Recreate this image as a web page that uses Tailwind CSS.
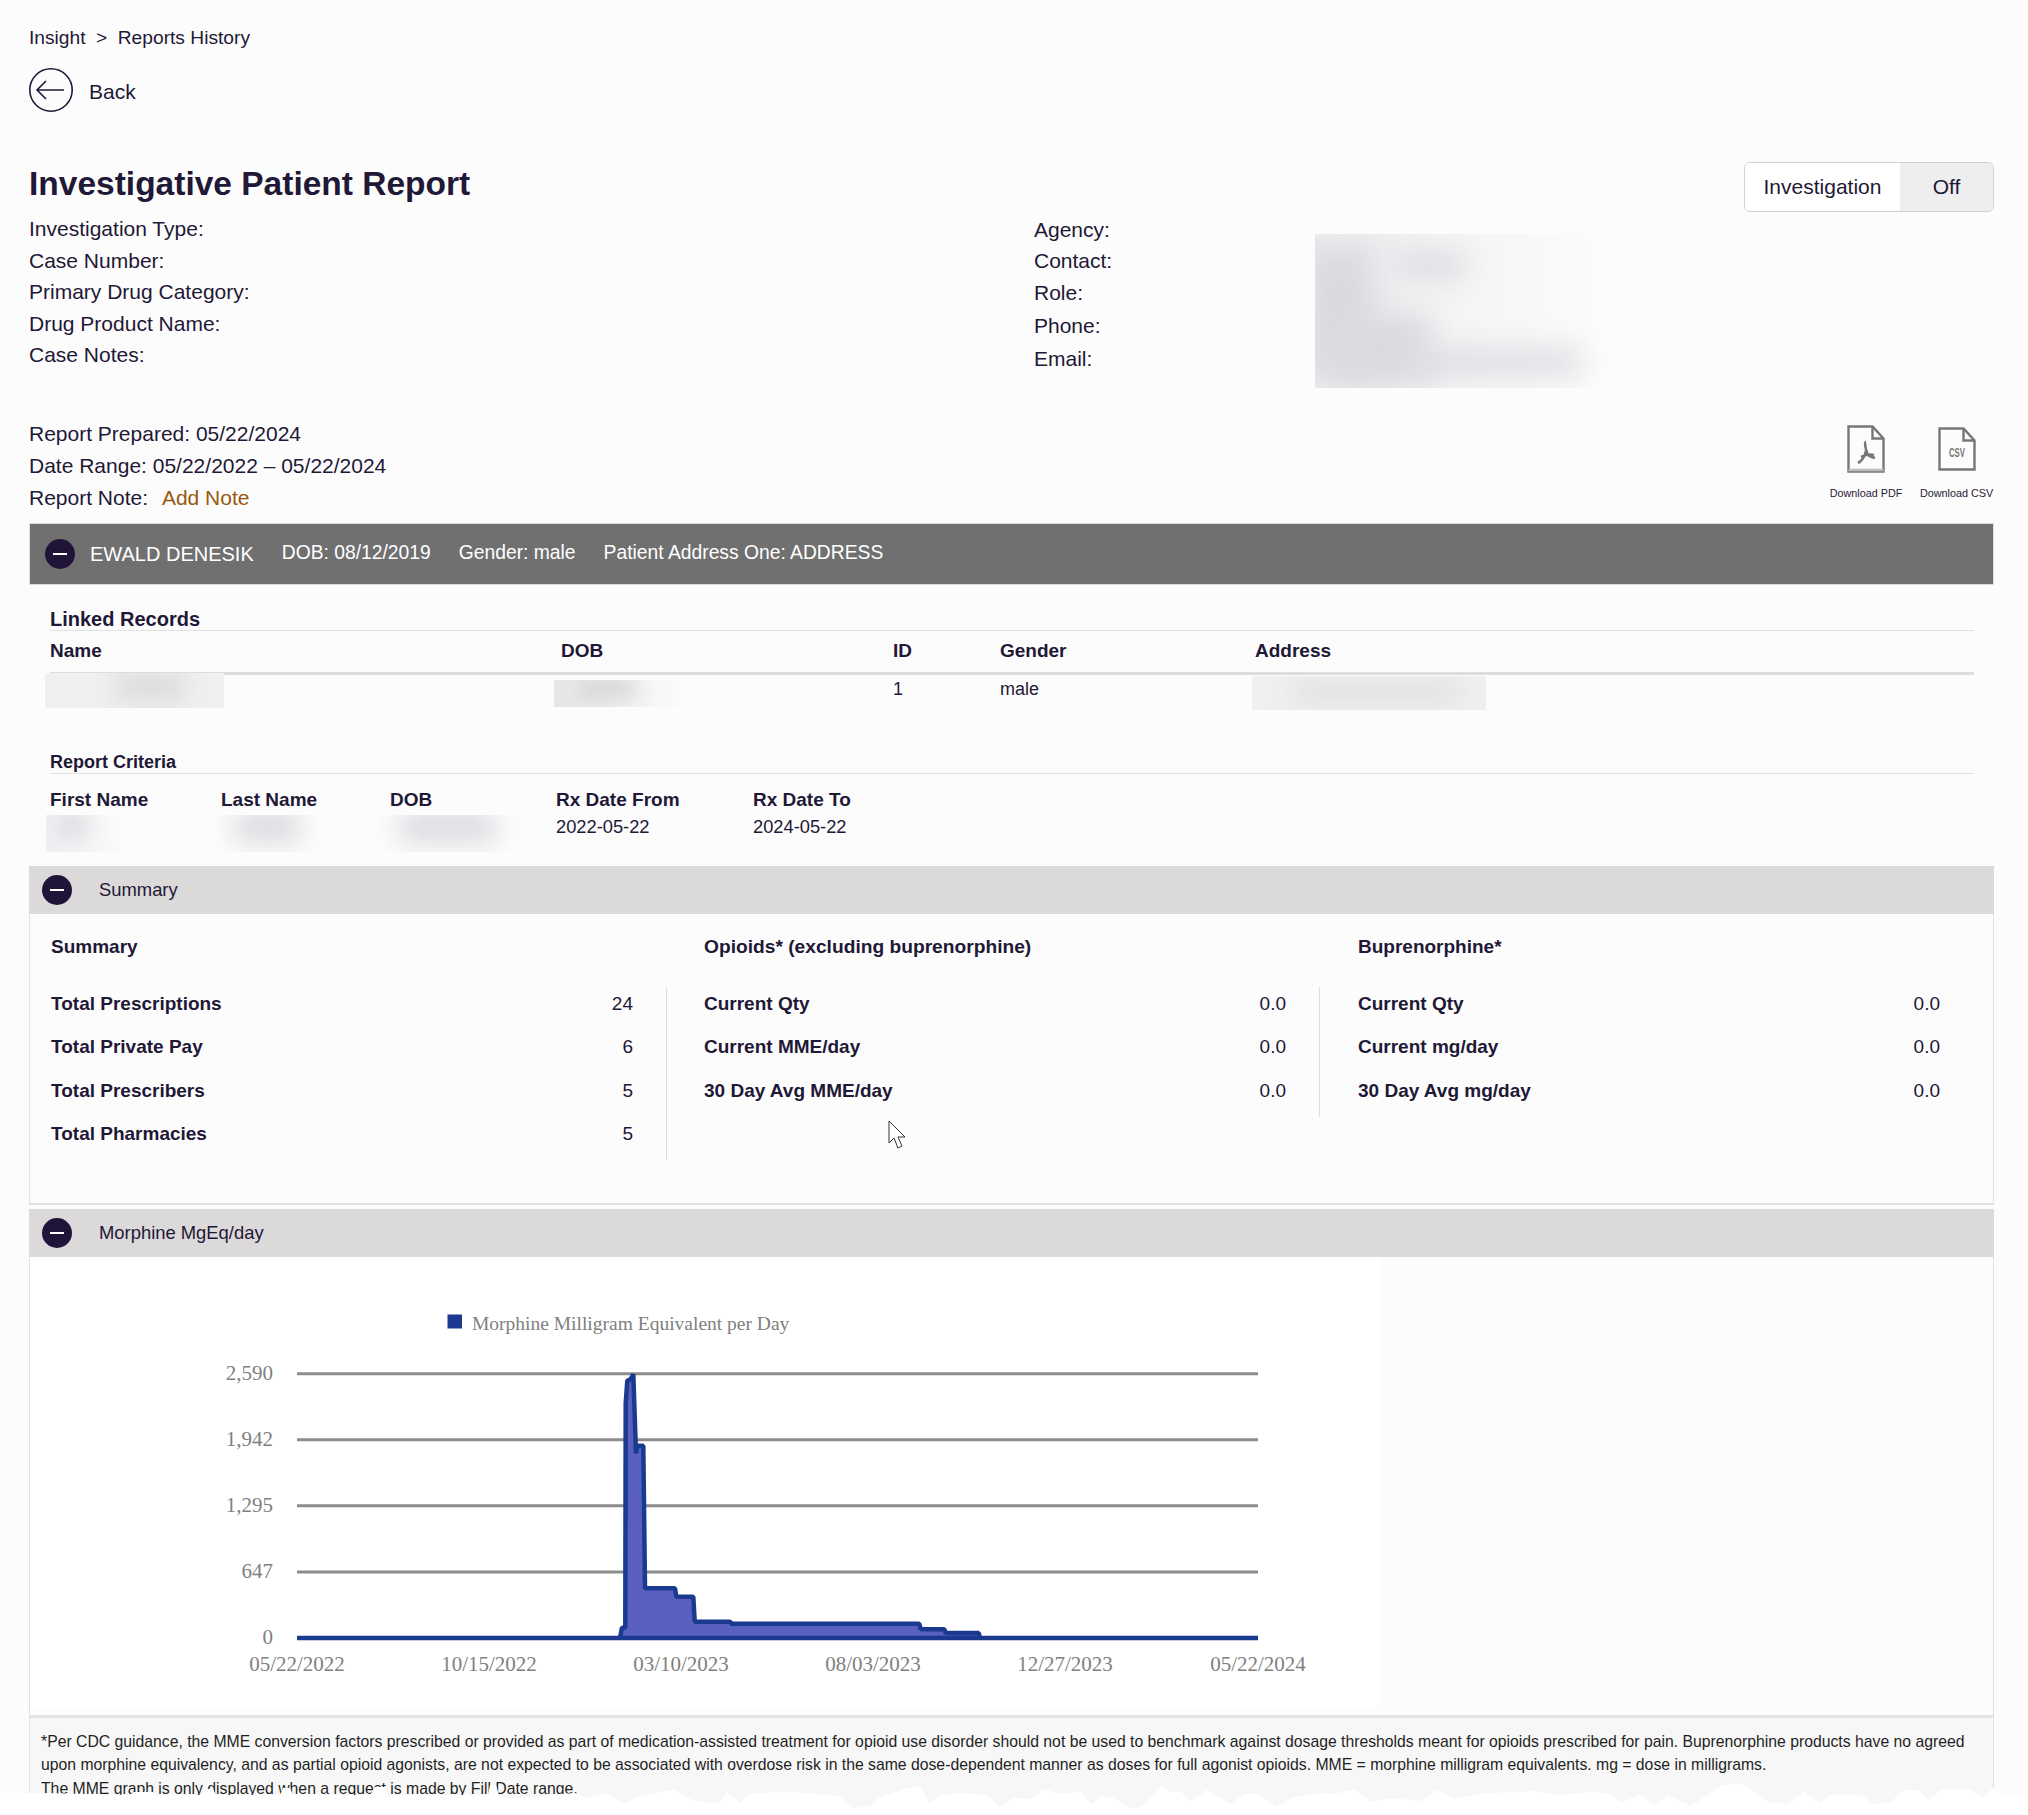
<!DOCTYPE html>
<html lang="en">
<head>
<meta charset="UTF-8">
<title>Investigative Patient Report</title>
<script src="https://cdn.jsdelivr.net/npm/@tailwindcss/browser@4"></script>
</head>
<body class="bg-[#fcfcfc] font-['Liberation_Sans',Arial,sans-serif] text-[#1f1836]">
<div class="relative w-[2028px] h-[1815px] overflow-hidden pl-[29px] pr-[34px]">

    <!-- breadcrumb / back -->
    <div class="pt-[26px] h-[50px] flex items-center gap-[10.5px] text-[19.2px] leading-6">
        <span>Insight</span><span>&gt;</span><span>Reports History</span>
    </div>
    <div class="mt-[18px] h-11 flex items-center gap-4">
        <svg class="w-11 h-11" viewBox="0 0 44 44" fill="none" stroke="#1f1836" stroke-width="1.6"><circle cx="22" cy="22" r="21.2"/><path d="M35 22H9M17 13l-9 9 9 9"/></svg>
        <span class="text-[21px] mt-[3px]">Back</span>
    </div>

    <!-- title -->
    <div class="mt-[50px] flex justify-between items-start">
        <h1 class="text-[33.5px] leading-[44px] font-bold">Investigative Patient Report</h1>
        <div class="flex w-[250px] h-[50px] border border-[#d0d0d0] rounded-[6px] overflow-hidden text-[21px]">
            <div class="w-[155px] flex items-center justify-center bg-white">Investigation</div>
            <div class="flex-1 flex items-center justify-center bg-[#eeeeee]">Off</div>
        </div>
    </div>

    <!-- investigation info -->
    <div class="relative mt-[2px] flex text-[21px] h-[203px]">
        <div class="w-[1005px] -mt-px leading-[31.5px]">
            <div>Investigation Type:</div>
            <div>Case Number:</div>
            <div>Primary Drug Category:</div>
            <div>Drug Product Name:</div>
            <div>Case Notes:</div>
        </div>
        <div>
            <div class="h-[31px] leading-[31px]">Agency:</div>
            <div class="h-[31px] leading-[31px]">Contact:</div>
            <div class="h-[33px] leading-[33px]">Role:</div>
            <div class="h-[33px] leading-[33px]">Phone:</div>
            <div class="h-[33px] leading-[33px]">Email:</div>
        </div>
        <!-- redacted contact -->
        <div class="absolute left-[1286px] top-[20px] w-[295px] h-[154px] overflow-hidden bg-linear-to-r from-[#eeeef0] to-[#fcfcfc]">
            <div class="absolute left-[-10px] top-[10px] w-[70px] h-[135px] bg-[#dbd9de] blur-[16px]"></div>
            <div class="absolute left-[80px] top-[18px] w-[70px] h-[26px] bg-[#dddbe0] blur-[14px]"></div>
            <div class="absolute left-[20px] top-[80px] w-[95px] h-[70px] bg-[#dcdae0] blur-[14px]"></div>
            <div class="absolute left-[90px] top-[115px] w-[175px] h-[26px] bg-[#dedce1] blur-[14px]"></div>
        </div>
    </div>

    <!-- report dates + downloads -->
    <div class="flex justify-between h-[106px] text-[21px] leading-[32px]">
        <div class="pt-px">
            <div>Report Prepared: 05/22/2024</div>
            <div>Date Range: 05/22/2022 – 05/22/2024</div>
            <div>Report Note: <a class="ml-[8px] text-[#98590f]">Add Note</a></div>
        </div>
        <div class="flex gap-[17px] pt-[8px] text-[10.8px] leading-[14px]">
            <div class="flex flex-col items-center w-[72px] whitespace-nowrap">
                <svg class="w-[38px] h-[48px]" viewBox="0 0 38 48" fill="none" stroke="#777" stroke-width="2.4"><path d="M1.5 1.5h24l11 12v33h-35z"/><path d="M25.5 1.5v12h11"/><path d="M1.5 45h35" stroke="#bbb"/><path d="M19 17c-2 0 0 8 1 11 1 3 4 4 8 5M19 26c-1 4-4 10-8 12M14 32c4-2 9-3 13-2" stroke-width="2.6"/></svg>
                <span class="mt-[13px]">Download PDF</span>
            </div>
            <div class="flex flex-col items-center w-[75px] whitespace-nowrap">
                <svg class="w-[38px] h-[44px] mt-[2px]" viewBox="0 0 38 44" fill="none" stroke="#777" stroke-width="2.4"><path d="M1.5 1.5h24l11 12v29h-35z"/><path d="M25.5 1.5v12h11"/><text x="19" y="30" text-anchor="middle" font-size="13" font-weight="700" fill="#777" stroke="none" font-family="Liberation Sans Narrow,Liberation Sans,sans-serif" textLength="16" lengthAdjust="spacingAndGlyphs">CSV</text></svg>
                <span class="mt-[15px]">Download CSV</span>
            </div>
        </div>
    </div>

    <!-- patient bar -->
    <div class="h-[62px] bg-[#707070] border border-[#dddddd] flex items-center pl-[15px] gap-[15px] text-white text-[19.3px]">
        <span class="w-[30px] h-[30px] rounded-full bg-[#201538] flex items-center justify-center"><span class="w-[14px] h-[2px] bg-white"></span></span>
        <div class="flex items-center gap-[28px] pb-[1px]"><span class="text-[20px]">EWALD DENESIK</span><span>DOB: 08/12/2019</span><span>Gender: male</span><span>Patient Address One: ADDRESS</span></div>
    </div>

    <!-- linked records -->
    <div class="relative pt-[23px] pl-[21px] pr-[20px]">
        <div class="h-[23px] border-b border-[#e2e2e2] font-bold text-[20px] leading-[22px]">Linked Records</div>
        <div class="grid grid-cols-[511px_332px_107px_255px_1fr] h-[44px] items-center border-b-[3px] border-[#dddddd] font-bold text-[19px]">
            <div>Name</div><div>DOB</div><div>ID</div><div>Gender</div><div>Address</div>
        </div>
        <div class="grid grid-cols-[511px_332px_107px_255px_1fr] h-[28px] items-center text-[18px]">
            <div></div><div></div><div>1</div><div>male</div><div></div>
        </div>
        <div class="mt-[48px] h-[23px] border-b border-[#e2e2e2] font-bold text-[18px] leading-[22px]">Report Criteria</div>
        <div class="mt-[7px] grid grid-cols-[171px_169px_166px_197px_1fr] h-[38px] items-center font-bold text-[19px]">
            <div>First Name</div><div>Last Name</div><div>DOB</div><div>Rx Date From</div><div>Rx Date To</div>
        </div>
        <div class="grid grid-cols-[171px_169px_166px_197px_1fr] h-[16px] leading-[16px] items-center text-[18.3px]">
            <div></div><div></div><div></div><div>2022-05-22</div><div>2024-05-22</div>
        </div>
        <!-- redactions -->
        <div class="absolute left-[16px] top-[88px] w-[179px] h-[35px] overflow-hidden bg-[#f0f0f0]"><div class="absolute left-[70px] top-[2px] w-[70px] h-[24px] bg-[#d8d8d8] blur-[12px]"></div></div>
        <div class="absolute left-[525px] top-[95px] w-[136px] h-[27px] overflow-hidden bg-linear-to-r from-[#e6e6e6] to-[#fcfcfc]"><div class="absolute left-[25px] top-0 w-[55px] h-[18px] bg-[#d2d2d2] blur-[10px]"></div></div>
        <div class="absolute left-[1223px] top-[91px] w-[234px] h-[34px] overflow-hidden bg-[#f0f0f0]"><div class="absolute left-[40px] top-[4px] w-[170px] h-[24px] bg-[#e2e2e2] blur-[12px]"></div></div>
        <div class="absolute left-[17px] top-[230px] w-[84px] h-[37px] overflow-hidden bg-linear-to-r from-[#f0eff2] to-[#fcfcfc]"><div class="absolute left-[12px] top-[0px] w-[30px] h-[22px] bg-[#dddbe0] blur-[10px]"></div></div>
        <div class="absolute left-[161px] top-[230px] w-[160px] h-[37px] overflow-hidden"><div class="absolute left-[45px] top-[-4px] w-[65px] h-[32px] bg-[#dcdadf] blur-[13px]"></div></div>
        <div class="absolute left-[331px] top-[230px] w-[190px] h-[37px] overflow-hidden"><div class="absolute left-[40px] top-[-4px] w-[95px] h-[32px] bg-[#dcdadf] blur-[13px]"></div></div>
    </div>

    <!-- summary -->
    <div class="absolute left-[29px] top-[866px] w-[1965px]">
        <div class="h-[48px] bg-[#dbd9da] flex items-center pl-[13px] text-[18.4px]">
            <span class="w-[30px] h-[30px] rounded-full bg-[#201538] flex items-center justify-center"><span class="w-[14px] h-[2px] bg-white"></span></span>
            <span class="ml-[27px]">Summary</span>
        </div>
        <div class="h-[291px] border-x border-b-2 border-[#e2e2e2] flex text-[19px]">
            <div class="w-[637px] pl-[21px]">
                <div class="h-[73px] pt-[20px] font-bold leading-[26px]">Summary</div>
                <div class="border-r border-[#dddddd] pr-[33px]">
                    <div class="h-[43.4px] flex justify-between leading-[33px]"><b>Total Prescriptions</b><span>24</span></div>
                    <div class="h-[43.4px] flex justify-between leading-[33px]"><b>Total Private Pay</b><span>6</span></div>
                    <div class="h-[43.4px] flex justify-between leading-[33px]"><b>Total Prescribers</b><span>5</span></div>
                    <div class="h-[43.4px] flex justify-between leading-[33px]"><b>Total Pharmacies</b><span>5</span></div>
                </div>
            </div>
            <div class="w-[653px] pl-[37px]">
                <div class="h-[73px] pt-[20px] font-bold leading-[26px] text-[19.2px]">Opioids* (excluding buprenorphine)</div>
                <div class="border-r border-[#dddddd] pr-[33px]">
                    <div class="h-[43.4px] flex justify-between leading-[33px]"><b>Current Qty</b><span>0.0</span></div>
                    <div class="h-[43.4px] flex justify-between leading-[33px]"><b>Current MME/day</b><span>0.0</span></div>
                    <div class="h-[43.4px] flex justify-between leading-[33px]"><b>30 Day Avg MME/day</b><span>0.0</span></div>
                </div>
            </div>
            <div class="w-[620px] pl-[38px]">
                <div class="h-[73px] pt-[20px] font-bold leading-[26px]">Buprenorphine*</div>
                <div>
                    <div class="h-[43.4px] flex justify-between leading-[33px]"><b>Current Qty</b><span>0.0</span></div>
                    <div class="h-[43.4px] flex justify-between leading-[33px]"><b>Current mg/day</b><span>0.0</span></div>
                    <div class="h-[43.4px] flex justify-between leading-[33px]"><b>30 Day Avg mg/day</b><span>0.0</span></div>
                </div>
            </div>
        </div>

        <!-- morphine chart -->
        <div class="mt-[4px] h-[48px] bg-[#dbd9da] flex items-center pl-[13px] text-[18.4px]">
            <span class="w-[30px] h-[30px] rounded-full bg-[#201538] flex items-center justify-center"><span class="w-[14px] h-[2px] bg-white"></span></span>
            <span class="ml-[27px]">Morphine MgEq/day</span>
        </div>
        <div class="h-[458px] border-x border-[#e2e2e2]">
            <svg class="block w-[1350px] h-[450px] bg-white" viewBox="30 1257 1350 450" font-family="Liberation Serif, serif" fill="#808080">
                <rect x="447.5" y="1314.5" width="14.5" height="14" fill="#1a3a8f"/>
                <text x="472" y="1330" font-size="19.5">Morphine Milligram Equivalent per Day</text>
                <g stroke="#8c8c8c" stroke-width="3">
                    <path d="M297 1373.7H1258M297 1439.7H1258M297 1505.7H1258M297 1572H1258M297 1638H1258"/>
                </g>
                <path d="M297 1638H620L622 1627.7H625.3L625.7 1403.3L627.3 1380.7L630.7 1379L633.3 1374.3L636 1453.3L637.3 1445.7H643.3L645 1588.3H675L676.3 1596.7H693.3L694.7 1621.7H730L731.7 1623.7H919.3L920.7 1629.3H944.3L945.7 1633H978.7L980 1638H1258Z" fill="#5a60c0" stroke="#1a3a8f" stroke-width="4.5" stroke-linejoin="bevel"/>
                <g font-size="21" text-anchor="end">
                    <text x="273" y="1380">2,590</text>
                    <text x="273" y="1446">1,942</text>
                    <text x="273" y="1512">1,295</text>
                    <text x="273" y="1578">647</text>
                    <text x="273" y="1644">0</text>
                </g>
                <g font-size="21" text-anchor="middle">
                    <text x="297" y="1671">05/22/2022</text>
                    <text x="489" y="1671">10/15/2022</text>
                    <text x="681" y="1671">03/10/2023</text>
                    <text x="873" y="1671">08/03/2023</text>
                    <text x="1065" y="1671">12/27/2023</text>
                    <text x="1258" y="1671">05/22/2024</text>
                </g>
            </svg>
        </div>

        <!-- footnote -->
        <div class="h-[120px] bg-[#f7f7f7] border-t-[3px] border-x border-[#e2e2e2] pt-[12px] pl-[11px] text-[15.75px] leading-[23px] text-[#1f1f1f] whitespace-nowrap">
            *Per CDC guidance, the MME conversion factors prescribed or provided as part of medication-assisted treatment for opioid use disorder should not be used to benchmark against dosage thresholds meant for opioids prescribed for pain. Buprenorphine products have no agreed<br>
            upon morphine equivalency, and as partial opioid agonists, are not expected to be associated with overdose risk in the same dose-dependent manner as doses for full agonist opioids. MME = morphine milligram equivalents. mg = dose in milligrams.<br>
            <span class="inline-block mt-px">The MME graph is only displayed when a request is made by Fill Date range.</span>
        </div>
    </div>

    <!-- cursor from the capture -->
    <svg class="absolute left-[888px] top-[1120px] w-[20px] h-[30px]" viewBox="0 0 20 30" fill="#fff" stroke="#333" stroke-width="1"><path d="M1 1v22l5-5 4 10 4-2-4-9h7z"/></svg>

    <!-- torn edge of the capture -->
    <svg class="absolute left-0 top-[1775px] w-[2028px] h-[40px]" viewBox="0 0 2028 40" fill="#fff"><path d="M0 40V18L43 18L130 20L133 17L153 17L156 20L200 20L208 14L213 14L216 20L280 20L283 13L290 13L293 20L370 20L375 12L385 12L388 20L488 20L490 10L496 10L499 20L507 23L517 23L575 18L587 23L607 18L624 29L640 21L674 15L694 26L720 28L727 17L740 28L750 18L794 17L840 21L854 33L870 31L880 22L907 13L920 12L930 28L940 20L960 18L987 20L1000 32L1014 23L1031 24L1044 14L1061 19L1081 17L1091 29L1101 21L1111 22L1131 33L1141 32L1161 11L1171 17L1181 17L1191 26L1207 15L1231 29L1244 19L1257 19L1277 32L1291 23L1321 18L1334 19L1354 14L1371 27L1391 23L1421 26L1437 15L1454 24L1487 18L1521 17L1534 16L1561 20L1591 17L1608 18L1621 27L1641 20L1654 30L1668 20L1691 31L1721 11L1741 8L1768 27L1788 29L1804 16L1819 28L1831 20L1861 20L1874 29L1891 27L1904 15L1918 15L1929 25L1941 15L1971 14L1983 23L1993 13L2011 23L2021 17L2028 28V40Z"/></svg>
</div>
</body>
</html>
